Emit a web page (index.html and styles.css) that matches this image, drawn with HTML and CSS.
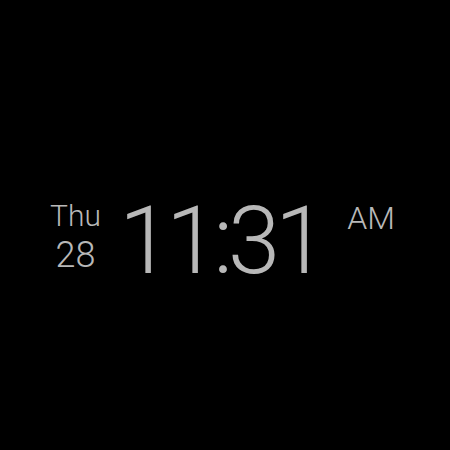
FILE: index.html
```html
<!DOCTYPE html>
<html>
<head>
<meta charset="utf-8">
<link rel="stylesheet" href="styles.css">
</head>
<body>
<div class="screen">
  <div class="clock">
    <div class="date">
      <div class="day">Thu</div>
      <div class="num">28</div>
    </div>
    <div class="time">11:31</div>
    <div class="ampm">AM</div>
  </div>
</div>
</body>
</html>
```
FILE: styles.css
```css
html, body { margin: 0; padding: 0; background: #000; }
.screen {
  width: 450px; height: 450px;
  box-sizing: border-box;
  padding: 194px 0 0 50px;
  font-family: Roboto, "Noto Sans", sans-serif;
  color: #b8b8b8;
}
.clock { display: flex; align-items: flex-start; }
.date { display: flex; flex-direction: column; align-items: center; margin-top: 7px; margin-right: 18px; }
.day { font-size: 30px; line-height: 30px; font-weight: 300; }
.num { font-size: 36px; line-height: 36px; font-weight: 300; margin-top: 6px; }
.time { font-size: 94px; line-height: 94px; font-weight: 300; letter-spacing: -5px; }
.ampm { font-size: 32px; line-height: 32px; font-weight: 300; margin-left: 25px; margin-top: 8px; }
```
